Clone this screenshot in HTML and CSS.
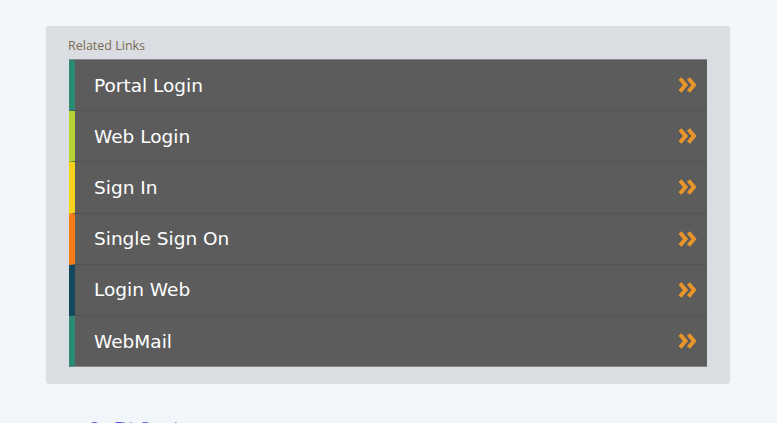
FILE: index.html
```html
<!DOCTYPE html>
<html>
<head>
    <title>Related Links</title>
    <link rel="stylesheet" href="styles.css">
</head>
<body>
    <div class="page">
        <div class="related-box">
            <h4>Related Links</h4>
            <ul class="links">
                <li class="teal"><a href="#">Portal Login</a><span class="arrow"><svg width="20" height="16" viewBox="0 0 20 16"><path d="M2 1.5 L7.5 8 L2 14.5 M10.5 1.5 L16 8 L10.5 14.5" fill="none" stroke="#e8952a" stroke-width="4"/></svg></span></li>
                <li class="lime"><a href="#">Web Login</a><span class="arrow"><svg width="20" height="16" viewBox="0 0 20 16"><path d="M2 1.5 L7.5 8 L2 14.5 M10.5 1.5 L16 8 L10.5 14.5" fill="none" stroke="#e8952a" stroke-width="4"/></svg></span></li>
                <li class="yellow"><a href="#">Sign In</a><span class="arrow"><svg width="20" height="16" viewBox="0 0 20 16"><path d="M2 1.5 L7.5 8 L2 14.5 M10.5 1.5 L16 8 L10.5 14.5" fill="none" stroke="#e8952a" stroke-width="4"/></svg></span></li>
                <li class="orange"><a href="#">Single Sign On</a><span class="arrow"><svg width="20" height="16" viewBox="0 0 20 16"><path d="M2 1.5 L7.5 8 L2 14.5 M10.5 1.5 L16 8 L10.5 14.5" fill="none" stroke="#e8952a" stroke-width="4"/></svg></span></li>
                <li class="navy"><a href="#">Login Web</a><span class="arrow"><svg width="20" height="16" viewBox="0 0 20 16"><path d="M2 1.5 L7.5 8 L2 14.5 M10.5 1.5 L16 8 L10.5 14.5" fill="none" stroke="#e8952a" stroke-width="4"/></svg></span></li>
                <li class="teal"><a href="#">WebMail</a><span class="arrow"><svg width="20" height="16" viewBox="0 0 20 16"><path d="M2 1.5 L7.5 8 L2 14.5 M10.5 1.5 L16 8 L10.5 14.5" fill="none" stroke="#e8952a" stroke-width="4"/></svg></span></li>
            </ul>
        </div>
        <div class="buy">
            <a href="#">Buy This Domain</a>
        </div>
    </div>
</body>
</html>
```

FILE: styles.css
```css
body {
    margin: 0;
    background-color: #f1f6fa;
    font-family: "DejaVu Sans", Verdana, sans-serif;
}
.page {
    padding: 26px 47px 0 46px;
}
.related-box {
    background-color: #dadee2;
    border-radius: 3px;
    padding: 12px 23px 17px 23px;
}
.related-box h4 {
    margin: 0 0 5px -1px;
    font-family: "Open Sans", sans-serif;
    font-weight: normal;
    font-size: 12.5px;
    line-height: 16px;
    color: #7a6a52;
}
.links {
    list-style: none;
    margin: 0;
    padding: 0;
    border-top: 1px solid #8a8a8a;
}
.links li {
    display: flex;
    align-items: center;
    justify-content: space-between;
    height: 50.2px;
    background-color: #5c5c5c;
    border-left: 6px solid #2b8a74;
    border-bottom: 1px solid #545454;
    padding: 0 9px 0 19px;
}
.links li:last-child {
    border-bottom: 1px solid #8a8a8a;
}
.links li.lime { border-left-color: #b9d233; }
.links li.yellow { border-left-color: #f5d31c; }
.links li.orange { border-left-color: #f77c16; }
.links li.navy { border-left-color: #12485c; }
.links a {
    color: #ffffff;
    text-decoration: none;
    font-size: 18.5px;
}
.arrow {
    display: flex;
}
.buy {
    padding: 36px 0 0 45px;
    font-size: 11px;
}
.buy a {
    color: #5050ee;
    text-decoration: none;
}
```
